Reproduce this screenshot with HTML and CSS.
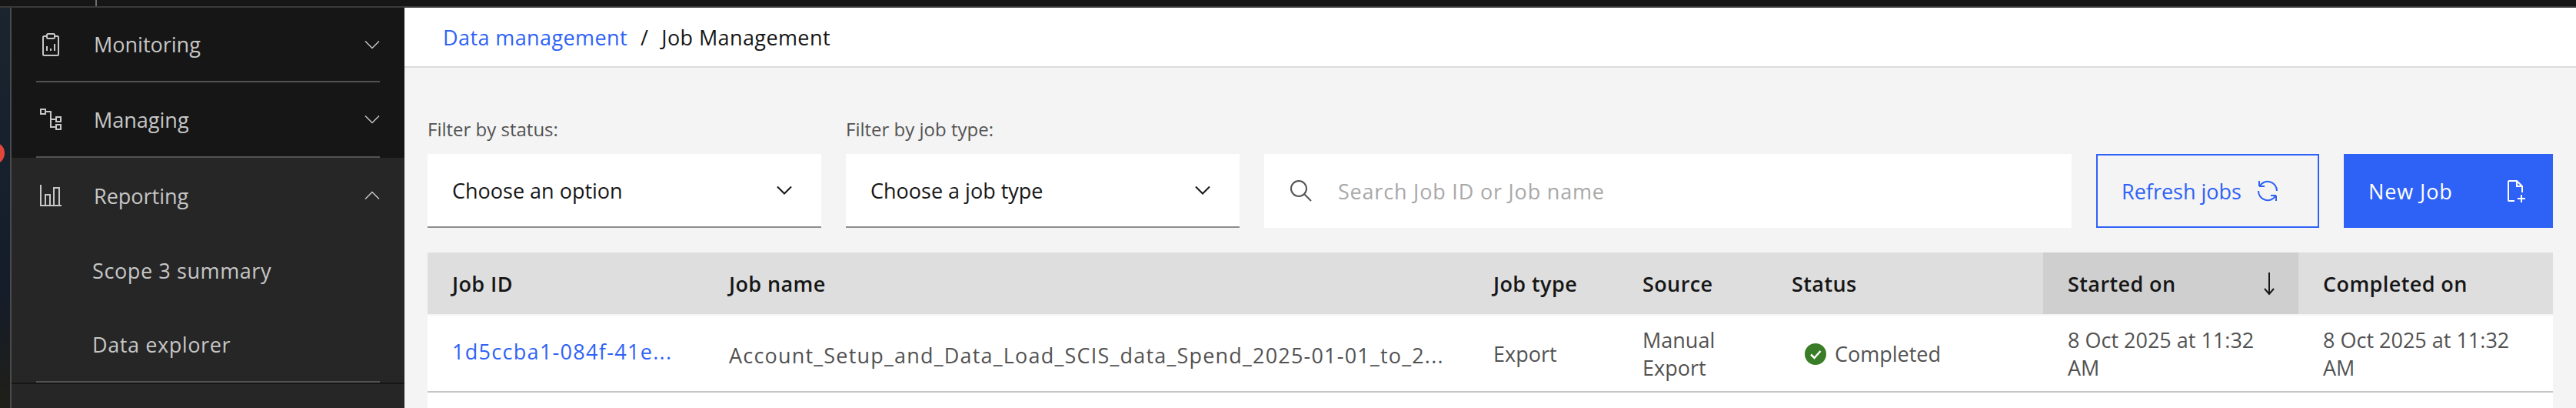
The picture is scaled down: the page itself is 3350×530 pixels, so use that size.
FILE: index.html
```html
<!DOCTYPE html>
<html lang="en">
<head>
<meta charset="UTF-8">
<title>Job Management</title>
<link rel="stylesheet" href="styles.css">
</head>
<body>
<div class="topbar"><span class="topbar-tick"></span></div>
<div class="layout">
    <div class="desktop"><span class="desktop-dot"></span></div>
    <nav class="sidenav">
        <div class="nav-group">
            <div class="nav-item">
                <svg class="nav-icon" viewBox="0 0 32 32" fill="none" stroke="#c6c6c6" stroke-width="2"><path d="M11 5H7.500A1.500 1.500 0 0 0 6 6.500V28.500A1.500 1.500 0 0 0 7.500 30H24.500A1.500 1.500 0 0 0 26 28.500V6.500A1.500 1.500 0 0 0 24.500 5H21"/><rect x="11" y="2" width="10" height="6" rx="1.500"/><path d="M11 24V18M16 24V21M21 24V15"/></svg>
                <span class="nav-label">Monitoring</span>
                <svg class="nav-chevron" viewBox="0 0 20 12" fill="none" stroke="#c6c6c6" stroke-width="1.500"><path d="M1 1.500 10 10.500 19 1.500"/></svg>
            </div>
        </div>
        <div class="nav-group">
            <div class="nav-item">
                <svg class="nav-icon" viewBox="0 0 32 32" fill="none" stroke="#c6c6c6" stroke-width="2"><rect x="3" y="3" width="6" height="6"/><rect x="23" y="13" width="6" height="6"/><rect x="23" y="23" width="6" height="6"/><path d="M9 6H16V26H23M16 16H23"/></svg>
                <span class="nav-label">Managing</span>
                <svg class="nav-chevron" viewBox="0 0 20 12" fill="none" stroke="#c6c6c6" stroke-width="1.500"><path d="M1 1.500 10 10.500 19 1.500"/></svg>
            </div>
        </div>
        <div class="nav-group nav-group-open">
            <div class="nav-item">
                <svg class="nav-icon" viewBox="0 0 32 32" fill="none" stroke="#c6c6c6" stroke-width="2"><path d="M3 2V29H30"/><rect x="9" y="15" width="6" height="14"/><rect x="20" y="6" width="7" height="23"/></svg>
                <span class="nav-label">Reporting</span>
                <svg class="nav-chevron" viewBox="0 0 20 12" fill="none" stroke="#c6c6c6" stroke-width="1.500"><path d="M1 10.500 10 1.500 19 10.500"/></svg>
            </div>
            <a class="nav-sub">Scope 3 summary</a>
            <a class="nav-sub">Data explorer</a>
        </div>
    </nav>
    <main class="main">
        <div class="breadcrumb">
            <a class="link">Data management</a>
            <span class="crumb-sep">/</span>
            <span>Job Management</span>
        </div>
        <div class="content">
            <div class="toolbar">
                <div class="filter">
                    <label class="filter-label">Filter by status:</label>
                    <div class="select">
                        <span>Choose an option</span>
                        <svg class="select-chevron" viewBox="0 0 20 12" fill="none" stroke="#161616" stroke-width="2"><path d="M1 1.500 10 10.500 19 1.500"/></svg>
                    </div>
                </div>
                <div class="filter">
                    <label class="filter-label">Filter by job type:</label>
                    <div class="select">
                        <span>Choose a job type</span>
                        <svg class="select-chevron" viewBox="0 0 20 12" fill="none" stroke="#161616" stroke-width="2"><path d="M1 1.500 10 10.500 19 1.500"/></svg>
                    </div>
                </div>
                <div class="search">
                    <svg class="search-icon" viewBox="0 0 32 32" fill="none" stroke="#525252" stroke-width="2"><circle cx="13" cy="13" r="10"/><path d="M20.500 20.500 29 29"/></svg>
                    <span class="search-text">Search Job ID or Job name</span>
                </div>
                <button class="btn btn-outline">
                    <span>Refresh jobs</span>
                    <svg class="btn-icon" viewBox="0 0 32 32" fill="none" stroke="#2e62f6" stroke-width="2"><path d="M5 10V3M5 10H12"/><path d="M5.500 10A12 12 0 0 1 28 16"/><path d="M27 22V29M27 22H20"/><path d="M26.500 22A12 12 0 0 1 4 16"/></svg>
                </button>
                <button class="btn btn-primary">
                    <span>New Job</span>
                    <svg class="btn-icon" viewBox="0 0 32 32" fill="none" stroke="#fff" stroke-width="2"><path d="M14 29H7A1 1 0 0 1 6 28V4A1 1 0 0 1 7 3H17L24 10V18"/><path d="M17 3V10H24"/><path d="M23 21V31M18 26H28"/></svg>
                </button>
            </div>
            <div class="table-wrap">
                <table class="jobs">
                    <colgroup>
                        <col class="col-id"><col class="col-name"><col class="col-type"><col class="col-source"><col class="col-status"><col class="col-started"><col class="col-done">
                    </colgroup>
                    <thead>
                        <tr>
                            <th>Job ID</th>
                            <th>Job name</th>
                            <th>Job type</th>
                            <th>Source</th>
                            <th>Status</th>
                            <th class="th-sorted">
                                <div class="th-inner">
                                    <span>Started on</span>
                                    <svg class="sort-icon" viewBox="0 0 16 32" fill="none" stroke="#161616" stroke-width="2"><path d="M8 2V30M2 23 8 30 14 23"/></svg>
                                </div>
                            </th>
                            <th>Completed on</th>
                        </tr>
                    </thead>
                    <tbody>
                        <tr>
                            <td><a class="link job-id">1d5ccba1-084f-41e...</a></td>
                            <td class="job-name">Account_Setup_and_Data_Load_SCIS_data_Spend_2025-01-01_to_2...</td>
                            <td>Export</td>
                            <td>Manual Export</td>
                            <td>
                                <div class="status">
                                    <svg class="status-icon" viewBox="0 0 28 28"><circle cx="14" cy="14" r="14" fill="#3a7d28"/><path d="M8 14.500 12.500 19 20.500 10" fill="none" stroke="#fff" stroke-width="2.500"/></svg>
                                    <span>Completed</span>
                                </div>
                            </td>
                            <td>8 Oct 2025 at 11:32 AM</td>
                            <td>8 Oct 2025 at 11:32 AM</td>
                        </tr>
                    </tbody>
                </table>
            </div>
        </div>
    </main>
</div>
</body>
</html>
```

FILE: styles.css
```css
* {
    box-sizing: border-box;
}
html, body {
    height: 100%;
}
body {
    margin: 0;
    display: flex;
    flex-direction: column;
    overflow: hidden;
    font-family: "Open Sans", "Noto Sans", sans-serif;
    font-size: 27px;
    color: #161616;
    background-color: #f4f4f4;
}
.topbar {
    height: 10px;
    flex: none;
    background-color: #161616;
    border-bottom: 2px solid #393939;
    padding-left: 124px;
}
.topbar-tick {
    display: block;
    width: 2px;
    height: 8px;
    background-color: #6f6f6f;
}
.layout {
    flex: 1;
    display: flex;
    min-height: 0;
}
.desktop {
    width: 15px;
    flex: none;
    padding-top: 175px;
    overflow: hidden;
    background: linear-gradient(#1a2530, #141c2a 70%, #201f18);
    border-right: 2px solid #4a4a4a;
}
.desktop-dot {
    display: block;
    width: 26px;
    height: 28px;
    margin-left: -20px;
    border-radius: 50%;
    background-color: #e2463a;
}
.sidenav {
    width: 511px;
    flex: none;
    background-color: #262626;
    color: #c6c6c6;
}
.nav-group {
    padding: 0 32px;
    height: 98px;
    background-color: #161616;
}
.nav-group:first-child {
    height: 97px;
}
.nav-group-open {
    height: 292px;
    background-color: #262626;
    box-shadow: 0 2px 0 #161616;
}
.nav-item {
    height: 98px;
    display: flex;
    align-items: center;
    border-bottom: 2px solid #525252;
}
.nav-group:first-child .nav-item {
    height: 97px;
}
.nav-group-open .nav-item {
    border-bottom: 0;
}
.nav-group-open .nav-sub:last-child {
    border-bottom: 2px solid #525252;
}
.nav-icon {
    width: 32px;
    height: 32px;
    flex: none;
    margin-left: 3px;
}
.nav-label {
    flex: 1;
    margin-left: 40px;
}
.nav-chevron {
    width: 20px;
    height: 12px;
    flex: none;
}
.nav-sub {
    display: flex;
    align-items: center;
    height: 97px;
    padding-left: 73px;
    letter-spacing: 0.6px;
}
.main {
    flex: 1;
    min-width: 0;
    display: flex;
    flex-direction: column;
}
.breadcrumb {
    height: 78px;
    flex: none;
    display: flex;
    align-items: center;
    padding-left: 50px;
    letter-spacing: 0.4px;
    background-color: #fff;
    border-bottom: 2px solid #dcdcdc;
}
.crumb-sep {
    margin: 0 17px;
}
.link {
    color: #2e62f6;
}
.content {
    flex: 1;
    display: flex;
    flex-direction: column;
    padding: 0 30px;
    min-height: 0;
}
.toolbar {
    display: flex;
    align-items: flex-end;
    height: 208px;
    flex: none;
    margin-bottom: 32px;
}
.filter {
    width: 512px;
    margin-right: 32px;
}
.filter-label {
    display: block;
    font-size: 24px;
    line-height: 32px;
    margin-bottom: 16px;
    color: #525252;
}
.select {
    height: 96px;
    display: flex;
    align-items: center;
    justify-content: space-between;
    padding: 0 38px 0 32px;
    background-color: #fff;
    border-bottom: 2px solid #8d8d8d;
}
.select-chevron {
    width: 20px;
    height: 12px;
}
.search {
    width: 1050px;
    height: 96px;
    display: flex;
    align-items: center;
    padding-left: 32px;
    background-color: #fff;
}
.search-icon {
    width: 32px;
    height: 32px;
    flex: none;
}
.search-text {
    margin-left: 32px;
    color: #a8a8a8;
    letter-spacing: 0.8px;
}
.btn {
    height: 96px;
    display: flex;
    align-items: center;
    font: inherit;
    padding: 0;
    margin: 0;
    border-radius: 0;
}
.btn-outline {
    width: 290px;
    margin-left: 32px;
    padding-left: 31px;
    gap: 18px;
    color: #2e62f6;
    background-color: #f4f4f4;
    border: 2px solid #2e62f6;
}
.btn-primary {
    width: 272px;
    margin-left: 32px;
    padding: 0 32px;
    justify-content: space-between;
    color: #fff;
    background-color: #2e62f6;
    border: none;
    letter-spacing: 0.9px;
}
.btn-icon {
    width: 32px;
    height: 32px;
    flex: none;
}
.table-wrap {
    flex: 1;
    background-color: #fff;
}
.jobs {
    width: 100%;
    table-layout: fixed;
    border-collapse: separate;
    border-spacing: 0;
}
.col-id { width: 360px; }
.col-name { width: 994px; }
.col-type { width: 194px; }
.col-source { width: 194px; }
.col-status { width: 359px; }
.col-started { width: 332px; }
.col-done { width: 331px; }
.jobs th {
    height: 82px;
    padding: 0 32px;
    text-align: left;
    font-weight: 600;
    letter-spacing: 0.4px;
    background-color: #dedede;
    border-bottom: 2px solid #f4f4f4;
}
.jobs .th-sorted {
    background-color: #cfcfcf;
}
.th-inner {
    display: flex;
    align-items: center;
    justify-content: space-between;
}
.sort-icon {
    width: 16px;
    height: 32px;
    margin-right: -2px;
}
.jobs td {
    height: 100px;
    padding: 2px 32px 0;
    line-height: 36px;
    color: #525252;
    background-color: #fff;
    border-bottom: 2px solid #c6c6c6;
}
.job-id {
    display: block;
    margin-top: -6px;
    white-space: nowrap;
    letter-spacing: 1.3px;
}
.jobs .job-name {
    white-space: nowrap;
    padding-top: 6px;
    letter-spacing: 1.2px;
}
.status {
    display: flex;
    align-items: center;
    gap: 11px;
    padding-left: 17px;
}
.status-icon {
    width: 28px;
    height: 28px;
    flex: none;
}
```
